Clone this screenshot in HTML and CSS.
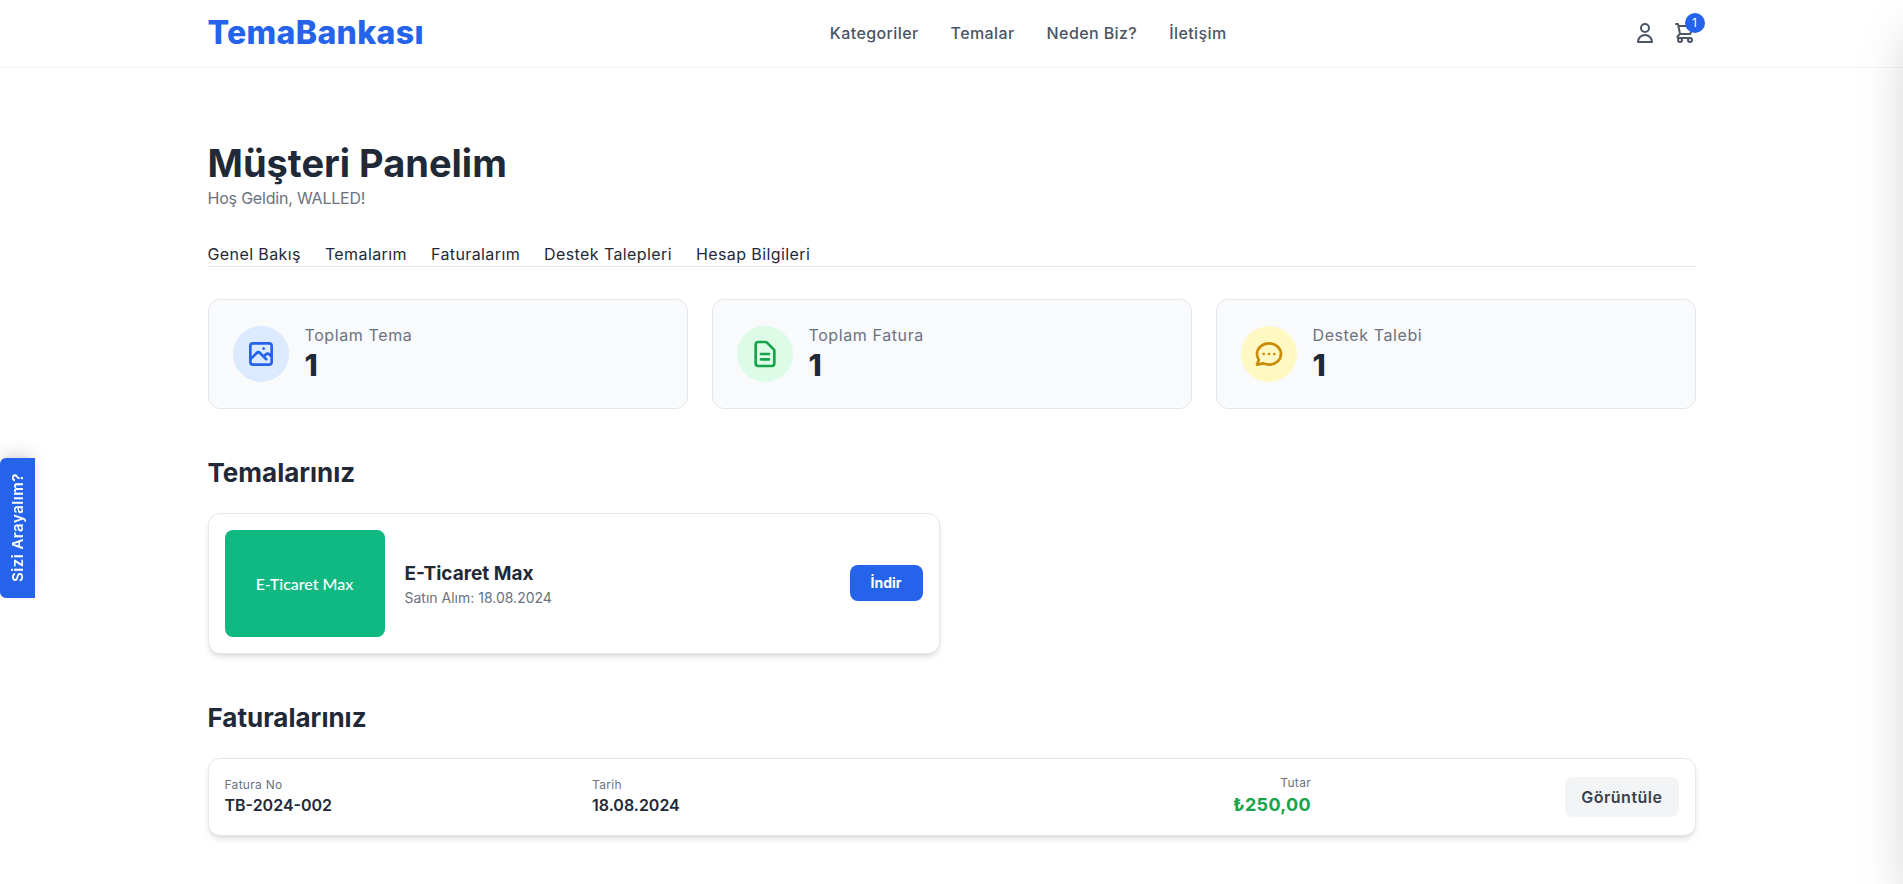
FILE: index.html
```html
<!DOCTYPE html>
<html lang="tr">
<head>
    <meta charset="UTF-8">
    <meta name="viewport" content="width=device-width, initial-scale=1.0">
    <title>Müşteri Panelim - TemaBankası</title>
    <link rel="stylesheet" href="styles.css">
</head>
<body>
    <header class="site-header">
        <div class="wrap header-row">
            <a class="logo" href="#">TemaBankası</a>
            <nav class="main-nav">
                <a href="#">Kategoriler</a>
                <a href="#">Temalar</a>
                <a href="#">Neden Biz?</a>
                <a href="#">İletişim</a>
            </nav>
            <div class="header-icons">
                <a class="icon-link" href="#">
                    <svg viewBox="0 0 24 24" width="24" height="24" fill="none" stroke="currentColor" stroke-width="2" stroke-linecap="round" stroke-linejoin="round">
                        <path d="M16 7a4 4 0 11-8 0 4 4 0 018 0zM12 14a7 7 0 00-7 7h14a7 7 0 00-7-7z"/>
                    </svg>
                </a>
                <a class="icon-link" href="#">
                    <svg viewBox="0 0 24 24" width="24" height="24" fill="none" stroke="currentColor" stroke-width="2" stroke-linecap="round" stroke-linejoin="round">
                        <path d="M3 3h2l.4 2M7 13h10l4-8H5.4M7 13L5.4 5M7 13l-2.293 2.293c-.63.63-.184 1.707.707 1.707H17m0 0a2 2 0 100 4 2 2 0 000-4zm-8 2a2 2 0 11-4 0 2 2 0 014 0z"/>
                    </svg>
                    <span class="cart-badge">1</span>
                </a>
            </div>
        </div>
    </header>

    <main class="wrap page">
        <h1 class="page-title">Müşteri Panelim</h1>
        <p class="page-sub">Hoş Geldin, WALLED!</p>

        <div class="tabs">
            <a href="#">Genel Bakış</a>
            <a href="#">Temalarım</a>
            <a href="#">Faturalarım</a>
            <a href="#">Destek Talepleri</a>
            <a href="#">Hesap Bilgileri</a>
        </div>

        <section class="stats">
            <div class="stat-card">
                <div class="stat-icon blue">
                    <svg viewBox="0 0 24 24" width="32" height="32" fill="none" stroke="currentColor" stroke-width="2" stroke-linecap="round" stroke-linejoin="round">
                        <path d="M4 16l4.586-4.586a2 2 0 012.828 0L16 16m-2-2l1.586-1.586a2 2 0 012.828 0L20 14m-6-6h.01M6 20h12a2 2 0 002-2V6a2 2 0 00-2-2H6a2 2 0 00-2 2v12a2 2 0 002 2z"/>
                    </svg>
                </div>
                <div class="stat-text">
                    <div class="stat-label">Toplam Tema</div>
                    <div class="stat-value">1</div>
                </div>
            </div>
            <div class="stat-card">
                <div class="stat-icon green">
                    <svg viewBox="0 0 24 24" width="32" height="32" fill="none" stroke="currentColor" stroke-width="2" stroke-linecap="round" stroke-linejoin="round">
                        <path d="M9 12h6m-6 4h6m2 5H7a2 2 0 01-2-2V5a2 2 0 012-2h5.586a1 1 0 01.707.293l5.414 5.414a1 1 0 01.293.707V19a2 2 0 01-2 2z"/>
                    </svg>
                </div>
                <div class="stat-text">
                    <div class="stat-label">Toplam Fatura</div>
                    <div class="stat-value">1</div>
                </div>
            </div>
            <div class="stat-card">
                <div class="stat-icon yellow">
                    <svg viewBox="0 0 24 24" width="32" height="32" fill="none" stroke="currentColor" stroke-width="2" stroke-linecap="round" stroke-linejoin="round">
                        <path d="M8 12h.01M12 12h.01M16 12h.01M21 12c0 4.418-4.03 8-9 8a9.863 9.863 0 01-4.255-.949L3 20l1.395-3.72C3.512 15.042 3 13.574 3 12c0-4.418 4.03-8 9-8s9 3.582 9 8z"/>
                    </svg>
                </div>
                <div class="stat-text">
                    <div class="stat-label">Destek Talebi</div>
                    <div class="stat-value">1</div>
                </div>
            </div>
        </section>

        <h2 class="section-title">Temalarınız</h2>
        <div class="theme-grid">
            <div class="theme-card">
                <div class="theme-thumb">E-Ticaret Max</div>
                <div class="theme-info">
                    <h3>E-Ticaret Max</h3>
                    <p>Satın Alım: 18.08.2024</p>
                </div>
                <a class="btn-primary" href="#">İndir</a>
            </div>
        </div>

        <h2 class="section-title">Faturalarınız</h2>
        <div class="invoice-card">
            <div>
                <div class="invoice-label">Fatura No</div>
                <div class="invoice-value">TB-2024-002</div>
            </div>
            <div>
                <div class="invoice-label">Tarih</div>
                <div class="invoice-value">18.08.2024</div>
            </div>
            <div class="invoice-total">
                <div class="invoice-label">Tutar</div>
                <div class="invoice-amount">₺250,00</div>
            </div>
            <div class="invoice-action">
                <a class="btn-light" href="#">Görüntüle</a>
            </div>
        </div>
    </main>

    <a class="call-tab" href="#">Sizi Arayalım?</a>
    <aside class="cart-drawer"></aside>
</body>
</html>
```

FILE: styles.css
```css
* {
    margin: 0;
    padding: 0;
    box-sizing: border-box;
}

html, body {
    overflow-x: hidden;
}

body {
    font-family: 'Inter', 'Noto Sans', sans-serif;
    background-color: #fff;
    color: #1f2937;
}

a {
    color: inherit;
    text-decoration: none;
}

.wrap {
    max-width: 1536px;
    margin: 0 auto;
    padding: 0 24px;
}

/* header */
.site-header {
    height: 68px;
    border-bottom: 1px solid #f3f4f6;
}

.header-row {
    height: 67px;
    padding-bottom: 2px;
    display: flex;
    align-items: center;
    justify-content: space-between;
}

.logo {
    font-size: 32px;
    font-weight: 800;
    letter-spacing: 0.35px;
    color: #2563eb;
}

.main-nav {
    display: flex;
    gap: 32px;
    font-size: 16px;
    font-weight: 500;
    letter-spacing: 0.4px;
    color: #4b5563;
}

.header-icons {
    display: flex;
    gap: 16px;
    margin-right: -1px;
    color: #4b5563;
}

.icon-link {
    position: relative;
    display: block;
    height: 24px;
}

.cart-badge {
    position: absolute;
    top: -8px;
    right: -8px;
    width: 20px;
    height: 20px;
    border-radius: 50%;
    background-color: #2563eb;
    color: #fff;
    font-size: 12px;
    line-height: 20px;
    text-align: center;
}

/* page title */
.page {
    padding-top: 72px;
    padding-bottom: 48px;
}

.page-title {
    font-size: 38px;
    line-height: 46px;
    font-weight: 700;
}

.page-sub {
    font-size: 16px;
    line-height: 24px;
    letter-spacing: -0.2px;
    color: #6b7280;
}

.tabs {
    display: flex;
    gap: 24px;
    margin-top: 32px;
    height: 25px;
    border-bottom: 1px solid #e5e7eb;
    font-size: 16px;
    line-height: 24px;
    letter-spacing: 0.4px;
}

/* stats */
.stats {
    display: grid;
    grid-template-columns: repeat(3, 1fr);
    gap: 24px;
    margin-top: 32px;
}

.stat-card {
    display: flex;
    align-items: center;
    gap: 16px;
    min-height: 110px;
    padding: 24px;
    background-color: #f9fafb;
    border: 1px solid #e5e7eb;
    border-radius: 12px;
}

.stat-text {
    margin-top: -2px;
}

.stat-icon {
    width: 56px;
    height: 56px;
    border-radius: 50%;
    display: flex;
    align-items: center;
    justify-content: center;
}

.stat-icon.blue {
    background-color: #dbeafe;
    color: #2563eb;
}

.stat-icon.green {
    background-color: #dcfce7;
    color: #16a34a;
}

.stat-icon.yellow {
    background-color: #fef9c3;
    color: #ca8a04;
}

.stat-label {
    font-size: 16px;
    line-height: 24px;
    letter-spacing: 0.6px;
    color: #6b7280;
}

.stat-value {
    font-size: 30px;
    line-height: 36px;
    font-weight: 800;
}

.section-title {
    font-size: 26px;
    line-height: 32px;
    font-weight: 700;
    margin-top: 48px;
    margin-bottom: 24px;
}

/* themes */
.theme-grid {
    display: grid;
    grid-template-columns: repeat(2, 1fr);
    gap: 24px;
}

.theme-card {
    display: flex;
    align-items: center;
    padding: 16px;
    background-color: #fff;
    border: 1px solid #e5e7eb;
    border-radius: 12px;
    box-shadow: 0 4px 6px -1px rgba(0, 0, 0, 0.1), 0 2px 4px -2px rgba(0, 0, 0, 0.1);
}

.theme-thumb {
    width: 160px;
    height: 107px;
    border-radius: 8px;
    background-color: #10b981;
    color: #fff;
    font-family: 'Lato', sans-serif;
    font-size: 16px;
    font-weight: 500;
    display: flex;
    align-items: center;
    justify-content: center;
}

.theme-info {
    flex: 1;
    margin-left: 20px;
}

.theme-info h3 {
    font-size: 19px;
    line-height: 28px;
    font-weight: 700;
}

.theme-info p {
    font-size: 14px;
    line-height: 20px;
    color: #6b7280;
}

.btn-primary {
    margin-bottom: 1px;
    padding: 8px 21px;
    border-radius: 8px;
    background-color: #2563eb;
    color: #fff;
    font-size: 14px;
    line-height: 20px;
    font-weight: 700;
}

/* invoices */
.invoice-card {
    display: grid;
    grid-template-columns: repeat(4, 1fr);
    gap: 16px;
    align-items: center;
    padding: 16px;
    background-color: #fff;
    border: 1px solid #e5e7eb;
    border-radius: 12px;
    box-shadow: 0 4px 6px -1px rgba(0, 0, 0, 0.1), 0 2px 4px -2px rgba(0, 0, 0, 0.1);
}

.invoice-label {
    font-size: 12px;
    line-height: 16px;
    letter-spacing: 0.3px;
    color: #6b7280;
}

.invoice-value {
    font-size: 16px;
    line-height: 24px;
    font-weight: 600;
}

.invoice-total {
    text-align: right;
}

.invoice-amount {
    font-size: 18px;
    line-height: 28px;
    font-weight: 700;
    letter-spacing: 0.3px;
    color: #16a34a;
}

.invoice-action {
    display: flex;
    justify-content: flex-end;
}

.btn-light {
    padding: 8px 16px;
    border-radius: 8px;
    background-color: #f3f4f6;
    color: #374151;
    font-size: 16px;
    line-height: 24px;
    font-weight: 600;
    letter-spacing: 0.5px;
}

/* floating bits */
.call-tab {
    position: fixed;
    left: 0;
    top: 458px;
    width: 35px;
    height: 140px;
    display: flex;
    align-items: center;
    justify-content: center;
    writing-mode: vertical-rl;
    transform: rotate(180deg);
    background-color: #2563eb;
    color: #fff;
    font-size: 15px;
    font-weight: 600;
    letter-spacing: 0.5px;
    border-radius: 0 6px 6px 0;
    box-shadow: 0 10px 15px -3px rgba(0, 0, 0, 0.1), 0 4px 6px -4px rgba(0, 0, 0, 0.1);
}

.cart-drawer {
    position: fixed;
    top: 0;
    right: 0;
    width: 400px;
    height: 100%;
    background-color: #fff;
    transform: translateX(100%);
    box-shadow: 0 25px 50px -12px rgba(0, 0, 0, 0.25);
}
```
